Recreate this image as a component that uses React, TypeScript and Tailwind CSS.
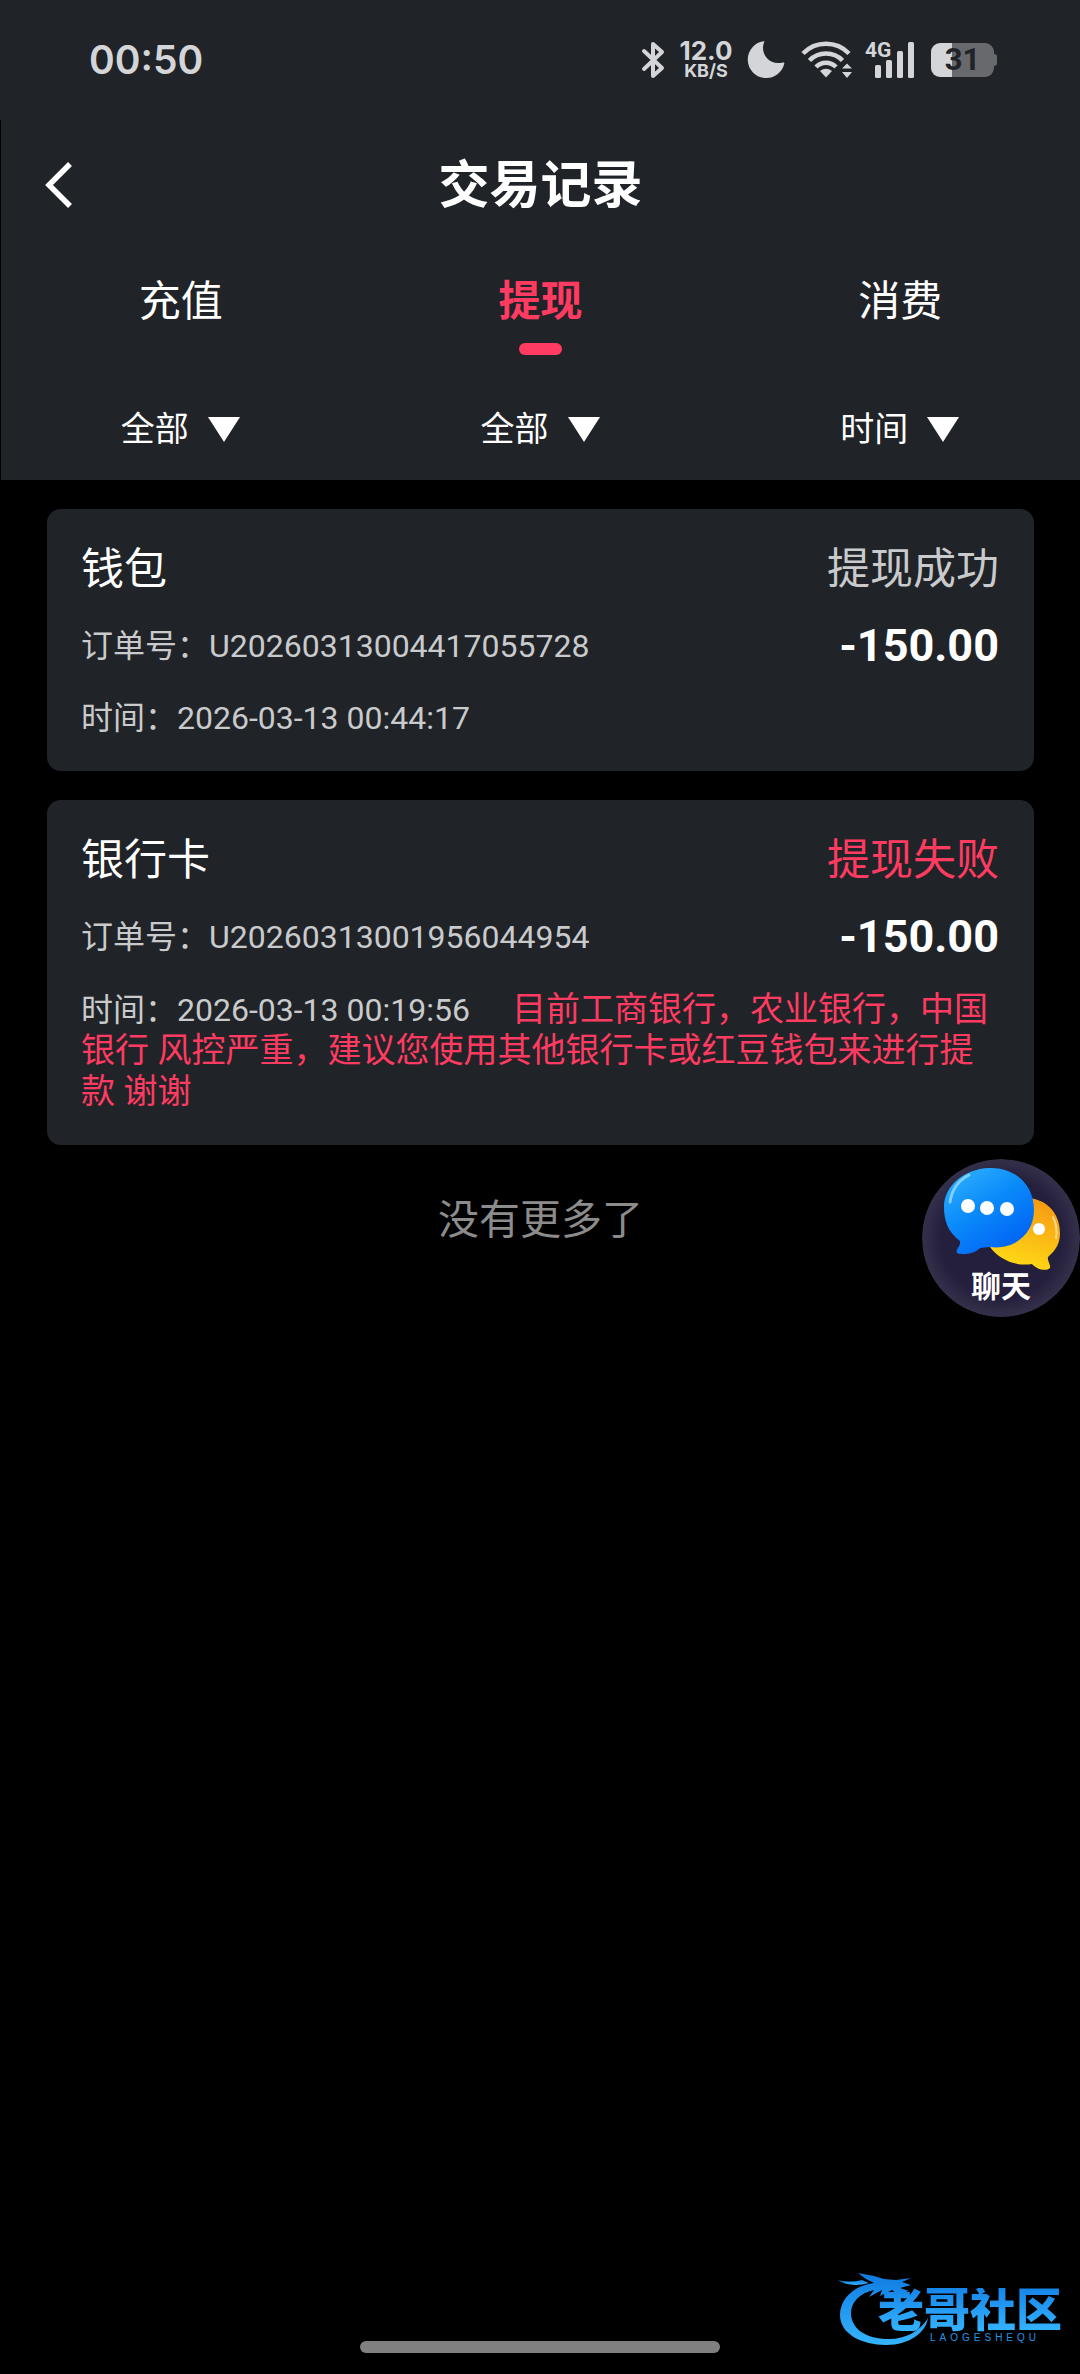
import React, { useState } from "react";

type Rec = {
  title: string;
  status: string;
  failed: boolean;
  order: string;
  time: string;
  amount: string;
  note?: string;
};

const records: Rec[] = [
  {
    title: "钱包",
    status: "提现成功",
    failed: false,
    order: "U20260313004417055728",
    time: "2026-03-13 00:44:17",
    amount: "-150.00",
  },
  {
    title: "银行卡",
    status: "提现失败",
    failed: true,
    order: "U20260313001956044954",
    time: "2026-03-13 00:19:56",
    amount: "-150.00",
    note: "目前工商银行，农业银行，中国银行 风控严重，建议您使用其他银行卡或红豆钱包来进行提款 谢谢",
  },
];

function StatusBar() {
  return (
    <div className="flex h-[120px] items-center justify-between bg-[#202327] pr-[83px] pl-[89px] text-[#d4d5d8]">
      <span className="font-['Inter',sans-serif] text-[39px] leading-[48px] font-semibold">00:50</span>
      <div className="flex items-center">
        <svg width="24" height="40" viewBox="0 0 24 40" fill="none" stroke="currentColor" strokeWidth="4" strokeLinejoin="round" strokeLinecap="round">
          <path d="M3 11 L21 28 L12 36 V4 L21 12 L3 29" />
        </svg>
        <div className="ml-[14px] flex w-[54px] flex-col items-center font-['Inter','Liberation_Sans',sans-serif] font-bold">
          <span className="text-[26px] leading-[22px]">12.0</span>
          <span className="text-[18px] leading-[18px]">KB/S</span>
        </div>
        <svg className="ml-[14px]" width="38" height="38" viewBox="0 0 38 38" fill="currentColor">
          <path d="M17.500 .5 C12.500 11 20.500 25 36 21.500 Q37.500 21 37.300 22.600 A18.500 18.500 0 1 1 16.500 .3 Q17.500 0 17.500 .5 Z" />
        </svg>
        <svg className="ml-[16px]" width="54" height="40" viewBox="0 0 54 40" fill="none" stroke="currentColor" strokeWidth="4.600">
          <path d="M2 13.500 A32 32 0 0 1 48 13.500" />
          <path d="M8.500 20.500 A23 23 0 0 1 41.500 20.500" />
          <path d="M15 27 A14 14 0 0 1 35 27" />
          <path d="M25 37.500 L19 31 Q25 26.500 31 31 Z" fill="currentColor" stroke="none" />
          <path d="M41 28.500 H51 L46 23.500 Z M41 32 H51 L46 38 Z" fill="currentColor" stroke="none" />
        </svg>
        <div className="relative ml-[10px] h-[40px] w-[49px]">
          <span className="absolute top-0 left-0 text-[21px] leading-[20px] font-bold">4G</span>
          <svg width="49" height="40" viewBox="0 0 49 40" fill="currentColor">
            <rect x="10" y="25" width="6" height="13" rx="1.500" />
            <rect x="21" y="20" width="6" height="18" rx="1.500" />
            <rect x="32" y="11" width="6" height="27" rx="1.500" />
            <rect x="43" y="2" width="6" height="36" rx="1.500" />
          </svg>
        </div>
        <div className="ml-[17px] flex items-center">
          <div className="flex h-[34px] w-[63px] items-center justify-center rounded-[9px] bg-[linear-gradient(to_right,#d4d5d8_33%,#68696d_33%)]">
            <span className="text-[31px] leading-[34px] font-bold text-[#202327]">31</span>
          </div>
          <div className="h-[12px] w-[3px] rounded-r-[3px] bg-[#68696d]" />
        </div>
      </div>
    </div>
  );
}

function Filter({ label }: { label: string }) {
  return (
    <button type="button" className="flex flex-1 items-center justify-center gap-[18px] text-[34px] leading-[48px]">
      <span>{label}</span>
      <svg width="34" height="28" viewBox="0 0 34 28" fill="currentColor">
        <path d="M1 2 H33 L17 27 Z" />
      </svg>
    </button>
  );
}

function Card({ rec }: { rec: Rec }) {
  return (
    <li className="rounded-[14px] bg-[#202327] pt-[30px] pr-[35px] pb-[33px] pl-[34px]">
      <div className="flex items-center justify-between text-[43px] leading-[60px]">
        <h2>{rec.title}</h2>
        <span className={rec.failed ? "text-[#ff3b61]" : "text-[#c9cacc]"}>{rec.status}</span>
      </div>
      <div className="mt-[23px] flex items-center justify-between">
        <span className="text-[32px] leading-[48px] text-[#c9cacc]">订单号：{rec.order}</span>
        <span className="text-[45px] leading-[48px] font-bold">{rec.amount}</span>
      </div>
      <p className="mt-[28px] text-[32px] leading-[40px] text-[#c9cacc]">
        时间：{rec.time}
        {rec.note && <span className="ml-[42px] text-[34px] text-[#ff3b61]">{rec.note}</span>}
      </p>
    </li>
  );
}

function ChatButton() {
  return (
    <button type="button" className="absolute top-[1159px] right-0 h-[158px] w-[158px] overflow-hidden rounded-full">
      <svg className="absolute inset-0" width="158" height="158" viewBox="0 0 158 158" aria-hidden="true">
        <defs>
          <radialGradient id="disc" cx=".5" cy=".5" r=".5">
            <stop offset=".75" stopColor="#231f3c" />
            <stop offset="1" stopColor="#35304a" />
          </radialGradient>
          <linearGradient id="blue" x1="0" y1="0" x2=".7" y2="1">
            <stop offset="0" stopColor="#35b6ff" />
            <stop offset=".5" stopColor="#0a8bfa" />
            <stop offset="1" stopColor="#0062f5" />
          </linearGradient>
          <linearGradient id="gold" x1=".6" y1="0" x2=".3" y2="1">
            <stop offset="0" stopColor="#f79a13" />
            <stop offset="1" stopColor="#ffdd16" />
          </linearGradient>
        </defs>
        <circle cx="79" cy="79" r="79" fill="url(#disc)" />
        <path d="M108 39 C128 42 138 57 138 74 C138 84 134 91 126 98 C125 102 129 106 128 109 C124 113 114 110 110 105 C92 108 76 99 68 88 Z" fill="url(#gold)" />
        <path d="M131 58 Q136 68 134 79" fill="none" stroke="#ffd98a" strokeWidth="2" strokeLinecap="round" />
        <circle cx="117" cy="70" r="6" fill="#fff" />
        <path d="M67 9 C92 8 112 25 112 51 C112 76 91 91 68 88 L58 89 C54 94 41 97 35 94 C33 91 39 87 38 82 C26 73 22 62 22 48 C22 27 42 10 67 9 Z" fill="url(#blue)" />
        <path d="M28 43 Q31 24 47 16" fill="none" stroke="#7fcfff" strokeWidth="3" strokeLinecap="round" />
        <g fill="#fff">
          <circle cx="46" cy="47" r="7" />
          <circle cx="65" cy="49" r="7" />
          <circle cx="85" cy="50" r="7" />
        </g>
      </svg>
      <span className="absolute inset-x-0 top-[112px] text-[30px] leading-[32px] font-bold">聊天</span>
    </button>
  );
}

function Watermark() {
  return (
    <div className="absolute right-[18px] bottom-[26px] h-[78px] w-[226px]">
      <svg className="absolute inset-0" width="226" height="78" viewBox="0 0 226 78" aria-hidden="true">
        <defs>
          <linearGradient id="dragon" x1="0" y1="0" x2="0" y2="1">
            <stop offset="0" stopColor="#0f7be0" />
            <stop offset="1" stopColor="#35b4ff" />
          </linearGradient>
        </defs>
        <g fill="url(#dragon)">
          <path d="M38 13 C16 16 4 30 4 45 C4 64 26 75 50 75 C74 75 90 62 92 48 C84 61 70 69 53 69 C30 69 15 59 15 43 C15 32 24 23 38 20 L33 27 L46 20 L44 26 L56 20 L62 24 L73 21 L64 18 L75 15 L66 12 L75 8 L60 10 L48 9 L38 6 L22 3 L30 9 Z" />
          <path d="M2 10 Q12 13 26 10 L33 13 Q14 18 2 10 Z" />
        </g>
      </svg>
      <div className="absolute top-[18px] left-[42px] bg-gradient-to-b from-[#1685e8] to-[#35b4ff] bg-clip-text text-[46px] leading-[44px] font-black whitespace-nowrap text-transparent">
        老哥社区
      </div>
      <div className="absolute top-[62px] left-[94px] font-['Liberation_Sans',sans-serif] text-[10px] leading-[12px] tracking-[4px] text-[#2497e8]">
        LAOGESHEQU
      </div>
    </div>
  );
}

export default function App() {
  const [tab, setTab] = useState("提现");
  return (
    <div className="relative min-h-screen bg-black font-['Roboto','Noto_Sans_CJK_SC',sans-serif] text-white">
      <StatusBar />
      <header className="ml-px bg-[#202327] pb-[27px]">
        <div className="relative flex h-[131px] items-center justify-center">
          <button type="button" aria-label="返回" className="absolute left-[38px]">
            <svg width="36" height="50" viewBox="0 0 36 50" fill="none" stroke="currentColor" strokeWidth="5.500">
              <path d="M31 3 L10 24 L31 45" />
            </svg>
          </button>
          <h1 className="text-[51px] leading-[60px] font-bold">交易记录</h1>
        </div>
        <nav className="flex pt-[21px] text-[42px] leading-[60px]">
          {["充值", "提现", "消费"].map((t) => (
            <button key={t} type="button" onClick={() => setTab(t)} className="flex flex-1 flex-col items-center gap-[11px]">
              <span className={t === tab ? "font-bold text-[#ff3b61]" : ""}>{t}</span>
              <span className={t === tab ? "h-[12px] w-[43px] rounded-full bg-[#ff3b61]" : "h-[12px] w-[43px]"} />
            </button>
          ))}
        </nav>
        <div className="flex pt-[50px]">
          <Filter label="全部" />
          <Filter label="全部" />
          <Filter label="时间" />
        </div>
      </header>
      <main className="pt-[29px] pr-[46px] pl-[47px]">
        <ul className="flex flex-col gap-[29px]">
          {records.map((r) => (
            <Card key={r.order} rec={r} />
          ))}
        </ul>
        <p className="pt-[45px] text-center text-[41px] leading-[60px] text-[#8c8c8c]">没有更多了</p>
      </main>
      <ChatButton />
      <Watermark />
      <div className="absolute bottom-[21px] left-1/2 h-[12px] w-1/3 -translate-x-1/2 rounded-full bg-[#808080]" />
    </div>
  );
}
